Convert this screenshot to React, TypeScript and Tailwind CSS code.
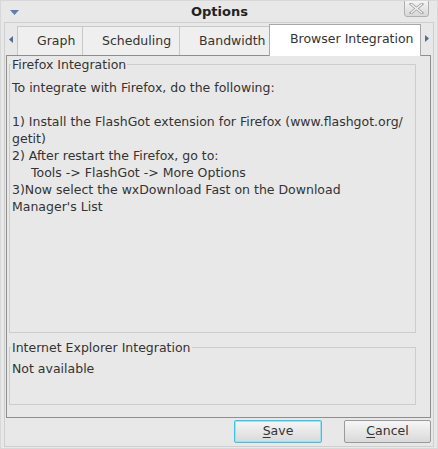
import React from "react";

const font = { fontFamily: '"DejaVu Sans", "Liberation Sans", sans-serif' };

function Tab({ label, w, active }: { label: string; w: number; active?: boolean }) {
  if (active) {
    return (
      <div
        className="h-[32px] bg-white border-t border-l border-r border-[#a8a8a8] flex items-center pl-[20px] text-[#333] -mb-[1px] relative z-10"
        style={{ width: w }}
      >
        <span className="-mt-[3px]">{label}</span>
      </div>
    );
  }
  return (
    <div
      className="h-[29px] bg-[#efefef] border-t border-l border-[#c8c8c8] flex items-center pl-[19px] text-[#333]"
      style={{ width: w }}
    >
      <span className="mt-[1px]">{label}</span>
    </div>
  );
}

export default function App() {
  return (
    <div
      className="w-[438px] h-[449px] bg-[#e8e8e8] border border-[#d8d8d8] text-[12.5px] flex flex-col overflow-hidden"
      style={font}
    >
      {/* title bar */}
      <div className="h-[21px] flex items-center relative">
        <div className="absolute left-[9px] top-[9px]">
          <svg width="9" height="5" viewBox="0 0 9 5">
            <polygon points="0,0 9,0 4.5,5" fill="#5a7fb5" />
          </svg>
        </div>
        <div className="flex-1 text-center font-bold text-[13px] text-[#222] pl-[1px]">Options</div>
        <div className="absolute right-[8px] top-[-1px] w-[25px] h-[17px] rounded-b-[3px] border border-[#b0b0b0] bg-gradient-to-b from-[#f4f4f4] to-[#d8d8d8] flex items-center justify-center">
          <svg width="15" height="11" viewBox="0 0 15 11">
            <path d="M2 1 L13 10 M13 1 L2 10" stroke="#a8a8a8" strokeWidth="3" strokeLinecap="square" />
            <path d="M2 1 L13 10 M13 1 L2 10" stroke="#f4f4f4" strokeWidth="1.2" />
          </svg>
        </div>
      </div>

      {/* frame */}
      <div className="flex-1 mx-[3px] mb-[1px] border-t border-l border-r border-b border-[#cfcfcf] flex flex-col">
        {/* tabs row */}
        <div className="h-[32px] flex items-end">
          <div className="w-[12px] h-full flex items-center justify-center">
            <svg width="4" height="7" viewBox="0 0 4 7" className="mt-[1px]">
              <polygon points="4,0 4,7 0,3.5" fill="#4f6d9a" />
            </svg>
          </div>
          <Tab label="Graph" w={65} />
          <Tab label="Scheduling" w={97} />
          <Tab label="Bandwidth" w={90} />
          <Tab label="Browser Integration" w={152} active />
          <div className="w-[11px] h-full flex items-center justify-center">
            <svg width="4" height="7" viewBox="0 0 4 7" className="-mt-[1px]">
              <polygon points="0,0 4,3.5 0,7" fill="#4f6d9a" />
            </svg>
          </div>
        </div>

        {/* panel */}
        <div className="ml-[1px] mr-[2px] h-[363px] border border-[#8e8e8e] bg-[#e8e8e8] pl-[2px] pr-[14px] pt-[1px] text-[#333]">
          <fieldset className="h-[276px] border border-[#cdcdcd] px-0">
            <legend className="ml-[1px] px-[1px] leading-[15px] text-[#333]">Firefox Integration</legend>
            <div className="pt-[7px] leading-[17px] pl-[2px] pr-[4px]">
              <div>To integrate with Firefox, do the following:</div>
              <div>&nbsp;</div>
              <div>1) Install the FlashGot extension for Firefox (www.flashgot.org/</div>
              <div>getit)</div>
              <div>2) After restart the Firefox, go to:</div>
              <div className="pl-[19px]">Tools -&gt; FlashGot -&gt; More Options</div>
              <div>3)Now select the wxDownload Fast on the Download</div>
              <div>Manager's List</div>
            </div>
          </fieldset>
          <fieldset className="h-[65px] mt-[7px] border border-[#cdcdcd] px-0">
            <legend className="ml-[1px] px-[1px] leading-[15px] text-[#333]">Internet Explorer Integration</legend>
            <div className="pt-[5px] pl-[2px] leading-[17px]">Not available</div>
          </fieldset>
        </div>

        {/* buttons */}
        <div className="flex-1 flex items-start justify-end gap-[22px] pt-[2px] pr-[2px]">
          <button className="w-[88px] h-[23px] rounded-[2px] border border-[#3ec3e6] bg-gradient-to-b from-[#f6f6f6] to-[#d9d9d9] text-[#333] text-[12.5px] shadow-[inset_0_0_0_1px_#9fe0f0]">
            <span className="underline underline-offset-[2px]">S</span>ave
          </button>
          <button className="w-[87px] h-[23px] rounded-[2px] border border-[#9a9a9a] bg-gradient-to-b from-[#f6f6f6] to-[#d9d9d9] text-[#333] text-[12.5px]">
            <span className="underline underline-offset-[2px]">C</span>ancel
          </button>
        </div>
      </div>
    </div>
  );
}
